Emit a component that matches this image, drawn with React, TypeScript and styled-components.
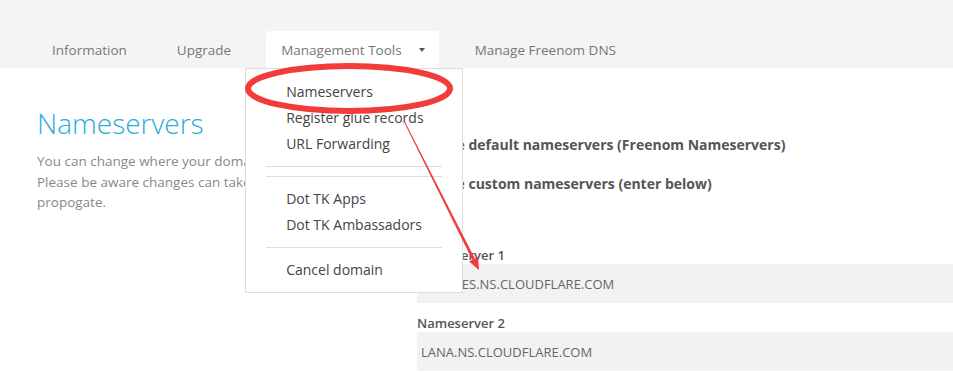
import React from "react";
import styled, { createGlobalStyle } from "styled-components";

const GlobalStyle = createGlobalStyle`
  body {
    margin: 0;
    background: #fff;
    font-family: "Open Sans", "Noto Sans", sans-serif;
    overflow: hidden;
  }
`;

const Page = styled.div`
  position: relative;
  width: 953px;
  height: 373px;
  overflow: hidden;
`;

const TabBar = styled.nav`
  display: flex;
  align-items: flex-end;
  gap: 21px;
  height: 68px;
  padding-left: 37px;
  background: #f4f4f4;
`;

const Tab = styled.div<{ active?: boolean }>`
  position: relative;
  display: flex;
  align-items: center;
  gap: 17px;
  height: 37px;
  padding: 0 14px 0 15px;
  font-size: 13.5px;
  color: #777;
  background: ${(p) => (p.active ? "#fff" : "transparent")};
  border-radius: 4px 4px 0 0;
`;

const Caret = styled.span`
  width: 0;
  height: 0;
  border-left: 3.5px solid transparent;
  border-right: 3.5px solid transparent;
  border-top: 4px solid #555;
  margin-top: 1px;
`;

const Dropdown = styled.div`
  position: absolute;
  top: 100%;
  left: -21px;
  width: 216px;
  padding: 10px 0 9px;
  background: #fff;
  border: 1px solid #dcdcdc;
  z-index: 2;
`;

const MenuItem = styled.div`
  padding-left: 40px;
  font-size: 14px;
  line-height: 26px;
  color: #444;
  white-space: nowrap;
`;

const Divider = styled.div`
  height: 1px;
  margin: 9px 20px;
  background: #dedede;
`;

const Content = styled.main`
  display: flex;
  padding-left: 37px;
`;

const Intro = styled.section`
  width: 380px;
  flex-shrink: 0;
`;

const Heading = styled.h1`
  margin: 37px 0 0;
  font-size: 28px;
  font-weight: 300;
  line-height: 36px;
  color: #29abe2;
`;

const Lead = styled.p`
  margin: 10px 0 0;
  font-size: 13.5px;
  line-height: 20.5px;
  color: #888;
`;

const Form = styled.section`
  width: 600px;
  flex-shrink: 0;
  padding-top: 67px;
`;

const Option = styled.label`
  display: flex;
  align-items: center;
  gap: 9px;
  margin-bottom: 19px;
  font-size: 14px;
  font-weight: 700;
  line-height: 20px;
  color: #555;
`;

const Radio = styled.span<{ checked?: boolean }>`
  width: 11px;
  height: 11px;
  border-radius: 50%;
  border: 1px solid #aaa;
  background: ${(p) => (p.checked ? "radial-gradient(#555 35%, #fff 40%)" : "#fff")};
`;

const FieldLabel = styled.div<{ first?: boolean }>`
  margin-top: ${(p) => (p.first ? "52px" : "11px")};
  font-size: 13px;
  font-weight: 600;
  line-height: 18px;
  color: #555;
`;

const Input = styled.div`
  height: 39px;
  display: flex;
  align-items: center;
  padding-left: 4px;
  background: #f2f2f2;
  font-size: 13px;
  color: #666;
`;

const Overlay = styled.svg`
  position: absolute;
  left: 0;
  top: 0;
  pointer-events: none;
  z-index: 3;
`;

const menu = [
  ["Nameservers", "Register glue records", "URL Forwarding"],
  [],
  ["Dot TK Apps", "Dot TK Ambassadors"],
  ["Cancel domain"],
];

export default function App() {
  return (
    <Page>
      <GlobalStyle />
      <TabBar>
        <Tab>Information</Tab>
        <Tab>Upgrade</Tab>
        <Tab active>
          Management Tools
          <Caret />
          <Dropdown>
            {menu.map((group, i) => (
              <React.Fragment key={i}>
                {i > 0 && <Divider />}
                {group.map((item) => (
                  <MenuItem key={item}>{item}</MenuItem>
                ))}
              </React.Fragment>
            ))}
          </Dropdown>
        </Tab>
        <Tab>Manage Freenom DNS</Tab>
      </TabBar>
      <Content>
        <Intro>
          <Heading>Nameservers</Heading>
          <Lead>
            You can change where your domain points to here.
            <br />
            Please be aware changes can take up to 24 hours to
            <br />
            propogate.
          </Lead>
        </Intro>
        <Form>
          <Option>
            <Radio />
            Use default nameservers (Freenom Nameservers)
          </Option>
          <Option>
            <Radio checked />
            Use custom nameservers (enter below)
          </Option>
          <FieldLabel first>Nameserver 1</FieldLabel>
          <Input>CHARLES.NS.CLOUDFLARE.COM</Input>
          <FieldLabel>Nameserver 2</FieldLabel>
          <Input>LANA.NS.CLOUDFLARE.COM</Input>
        </Form>
      </Content>
      <Overlay width="953" height="373" viewBox="0 0 953 373">
        <ellipse cx="349" cy="88.5" rx="101" ry="22.5" fill="none" stroke="#f23b3b" strokeWidth="6" />
        <polygon
          points="404.4,120.8 403.6,121.2 472.3,260 474.9,258.6"
          fill="#f23b3b"
        />
        <polygon points="479,270 469.1,261.5 478.1,257.1" fill="#f23b3b" />
      </Overlay>
    </Page>
  );
}
